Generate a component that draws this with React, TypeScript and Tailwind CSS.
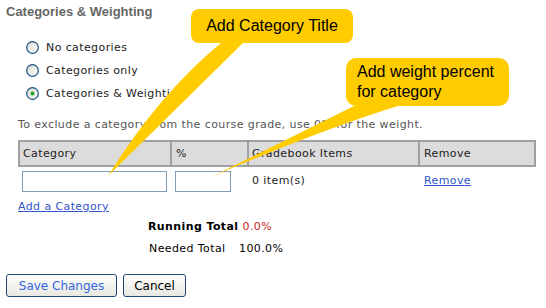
const Radio = ({ checked }: { checked?: boolean }) => (
  <svg width="13" height="13" viewBox="0 0 13 13">
    <defs>
      <linearGradient id="rg" x1="0" y1="0" x2="1" y2="1">
        <stop offset="0" stopColor="#d8d8d2" />
        <stop offset="1" stopColor="#ffffff" />
      </linearGradient>
    </defs>
    <circle cx="6.5" cy="6.5" r="5.8" fill="url(#rg)" stroke="#1c5180" strokeWidth="1.2" />
    {checked && <circle cx="6.5" cy="6.5" r="2" fill="#21a121" />}
  </svg>
);

const options = [
  { label: 'No categories', checked: false },
  { label: 'Categories only', checked: false },
  { label: 'Categories & Weighting', checked: true }
];

const App = () => {
  return (
    <div className="relative w-[546px] h-[308px] bg-white overflow-hidden font-['DejaVu_Sans',sans-serif] text-[11px] tracking-[0.4px] text-[#222]">
      <h1 className="pt-[4px] pl-[6px] leading-[16px] text-[13px] font-bold tracking-normal text-[#666] font-['Liberation_Sans',Arial,sans-serif]">
        Categories &amp; Weighting
      </h1>

      <div className="mt-[16px] ml-[26px] flex flex-col">
        {options.map((o) => (
          <label key={o.label} className="h-[23px] flex items-center gap-[7px]">
            <Radio checked={o.checked} />
            <span className="leading-[16px]">{o.label}</span>
          </label>
        ))}
      </div>

      <p className="mt-[12px] ml-[18px] leading-[16px] text-[#555]">
        To exclude a category from the course grade, use 0% for the weight.
      </p>

      <div className="mt-[7px] ml-[18px] w-[518px] h-[27px] flex border-2 border-[#a0a0a0] bg-[#dcdcdc] leading-[23px]">
        <div className="w-[152px] border-r-2 border-[#a0a0a0] pl-[3px]">Category</div>
        <div className="w-[77px] border-r-2 border-[#a0a0a0] pl-[4px]">%</div>
        <div className="w-[171px] border-r-2 border-[#a0a0a0] pl-[3px]">Gradebook Items</div>
        <div className="flex-1 pl-[4px]">Remove</div>
      </div>

      <div className="ml-[18px] flex items-center pt-[4px] pb-[4px]">
        <div className="w-[154px] pl-[4px]">
          <input type="text" className="w-[145px] h-[21px] border border-[#7f9db9] outline-none px-1" />
        </div>
        <div className="w-[77px] pl-[3px]">
          <input type="text" className="w-[56px] h-[21px] border border-[#7f9db9] outline-none px-1" />
        </div>
        <div className="w-[171px] pl-[3px]">0 item(s)</div>
        <div className="pl-[4px]">
          <a href="#" className="text-[#3355cc] underline">Remove</a>
        </div>
      </div>

      <div className="mt-[3px] ml-[18px] leading-[16px]">
        <a href="#" className="text-[#3355cc] underline">Add a Category</a>
      </div>

      <div className="mt-[4px] ml-[148px] leading-[16px] flex">
        <span className="font-bold text-black">Running Total</span>
        <span className="ml-[4px] text-[#cc2222]">0.0%</span>
      </div>
      <div className="mt-[6px] ml-[149px] leading-[16px] flex text-black">
        <span className="w-[90px]">Needed Total</span>
        <span>100.0%</span>
      </div>

      <div className="mt-[17px] ml-[6px] flex gap-[6px]">
        <button className="w-[111px] h-[23px] rounded-[3px] border border-[#1d4a7a] bg-gradient-to-b from-white to-[#e8e7e0] text-[12px] tracking-normal text-[#3366dd]">
          Save Changes
        </button>
        <button className="w-[63px] h-[23px] rounded-[3px] border border-[#1d4a7a] bg-gradient-to-b from-white to-[#e8e7e0] text-[12px] tracking-normal text-black">
          Cancel
        </button>
      </div>

      <svg className="absolute inset-0 pointer-events-none" width="546" height="308">
        <path d="M 222 42 Q 158 95 108 176 L 244 42 Z" fill="#ffcc00" />
        <path d="M 358 104 L 211 177 Q 320 130 404 104 Z" fill="#ffcc00" />
      </svg>

      <div className="absolute left-[191px] top-[9px] w-[162px] h-[34px] rounded-[8px] bg-[#ffcc00] flex items-center justify-center text-[16px] tracking-normal text-black font-['Liberation_Sans',Arial,sans-serif]">
        Add Category Title
      </div>
      <div className="absolute left-[346px] top-[58px] w-[163px] h-[48px] rounded-[10px] bg-[#ffcc00] pl-[11px] pt-[4px] text-[16px] leading-[20px] tracking-normal text-black font-['Liberation_Sans',Arial,sans-serif]">
        Add weight percent
        <br />
        for category
      </div>
    </div>
  );
};

export default App;
